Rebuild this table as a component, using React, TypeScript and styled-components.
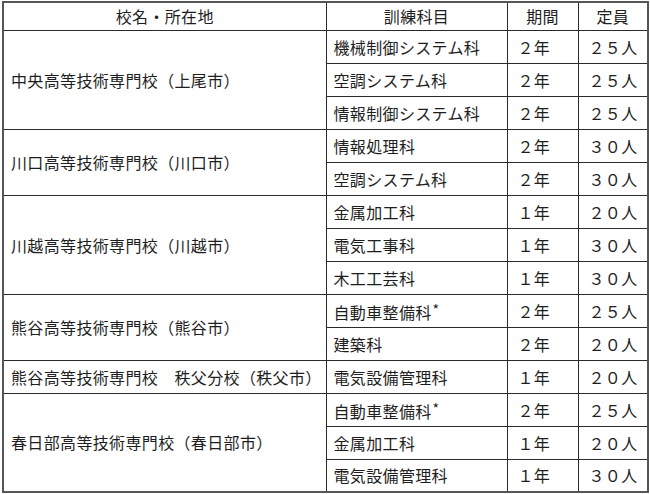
import styled, { createGlobalStyle } from "styled-components";

const GlobalStyle = createGlobalStyle`
  html, body {
    margin: 0;
    padding: 0;
    background: #ffffff;
  }
  body {
    font-family: "Noto Sans CJK JP", "Noto Sans", sans-serif;
    color: #1e1e1e;
  }
`;

type Course = {
  name: string;
  mark?: boolean;
  term: string;
  capacity: string;
};

type School = {
  school: string;
  courses: Course[];
};

const schools: School[] = [
  {
    school: "中央高等技術専門校（上尾市）",
    courses: [
      { name: "機械制御システム科", term: "２年", capacity: "２５人" },
      { name: "空調システム科", term: "２年", capacity: "２５人" },
      { name: "情報制御システム科", term: "２年", capacity: "２５人" },
    ],
  },
  {
    school: "川口高等技術専門校（川口市）",
    courses: [
      { name: "情報処理科", term: "２年", capacity: "３０人" },
      { name: "空調システム科", term: "２年", capacity: "３０人" },
    ],
  },
  {
    school: "川越高等技術専門校（川越市）",
    courses: [
      { name: "金属加工科", term: "１年", capacity: "２０人" },
      { name: "電気工事科", term: "１年", capacity: "３０人" },
      { name: "木工工芸科", term: "１年", capacity: "３０人" },
    ],
  },
  {
    school: "熊谷高等技術専門校（熊谷市）",
    courses: [
      { name: "自動車整備科", mark: true, term: "２年", capacity: "２５人" },
      { name: "建築科", term: "２年", capacity: "２０人" },
    ],
  },
  {
    school: "熊谷高等技術専門校　秩父分校（秩父市）",
    courses: [{ name: "電気設備管理科", term: "１年", capacity: "２０人" }],
  },
  {
    school: "春日部高等技術専門校（春日部市）",
    courses: [
      { name: "自動車整備科", mark: true, term: "２年", capacity: "２５人" },
      { name: "金属加工科", term: "１年", capacity: "２０人" },
      { name: "電気設備管理科", term: "１年", capacity: "３０人" },
    ],
  },
];

const Page = styled.div`
  padding: 1px 2px;
`;

const Table = styled.table`
  width: 645px;
  table-layout: fixed;
  border-collapse: collapse;
  border: 2px solid #555555;
  font-size: 16px;
  line-height: 1;
  letter-spacing: 0.35px;
`;

const HeadRow = styled.tr`
  height: 28px;
`;

const BodyRow = styled.tr`
  height: 33px;
`;

const HeadCell = styled.th`
  border: 1px solid #2a2a2a;
  font-weight: 400;
  text-align: center;
  vertical-align: middle;
  padding: 0;
  white-space: nowrap;
`;

const Cell = styled.td<{ $pad?: number }>`
  border: 1px solid #2a2a2a;
  text-align: left;
  vertical-align: middle;
  padding: 0 0 0 ${(p) => p.$pad ?? 7}px;
  white-space: nowrap;
`;

const Mark = styled.span`
  font-size: 14px;
  vertical-align: 4px;
  margin-left: 1px;
`;

export default function App() {
  return (
    <>
      <GlobalStyle />
      <Page>
        <Table>
          <colgroup>
            <col style={{ width: 323 }} />
            <col style={{ width: 181 }} />
            <col style={{ width: 71 }} />
            <col style={{ width: 70 }} />
          </colgroup>
          <thead>
            <HeadRow>
              <HeadCell>校名・所在地</HeadCell>
              <HeadCell>訓練科目</HeadCell>
              <HeadCell>期間</HeadCell>
              <HeadCell>定員</HeadCell>
            </HeadRow>
          </thead>
          <tbody>
            {schools.map((s) =>
              s.courses.map((c, i) => (
                <BodyRow key={s.school + i}>
                  {i === 0 && (
                    <Cell rowSpan={s.courses.length}>{s.school}</Cell>
                  )}
                  <Cell>
                    {c.name}
                    {c.mark && <Mark>*</Mark>}
                  </Cell>
                  <Cell $pad={10}>{c.term}</Cell>
                  <Cell $pad={10}>{c.capacity}</Cell>
                </BodyRow>
              ))
            )}
          </tbody>
        </Table>
      </Page>
    </>
  );
}
